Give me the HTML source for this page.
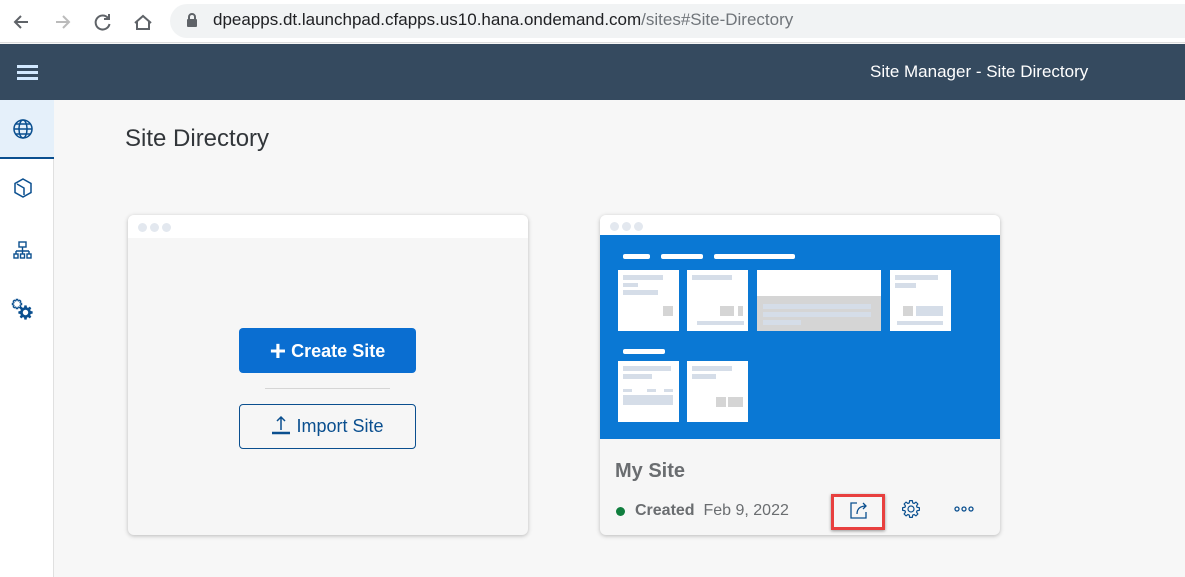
<!DOCTYPE html>
<html><head><style>
*{margin:0;padding:0;box-sizing:border-box}
body{width:1185px;height:577px;overflow:hidden;background:#f7f7f7;font-family:"Liberation Sans",sans-serif;position:relative}
.abs{position:absolute}
.bar{position:absolute;background:#fff;border-radius:2px}
.tile{position:absolute;background:#fff}
.ph{position:absolute;background:#d5dde8}
.gr{position:absolute;background:#d5d5d5}
</style></head><body>
<svg width="0" height="0" style="position:absolute"><defs>
<polygon id="gear" points="6.06,-1.74 8.4,-1.33 8.4,1.33 6.06,1.74 5.51,3.05 6.88,5 5,6.88 3.05,5.51 1.74,6.06 1.33,8.4 -1.33,8.4 -1.74,6.06 -3.05,5.51 -5,6.88 -6.88,5 -5.51,3.05 -6.06,1.74 -8.4,1.33 -8.4,-1.33 -6.06,-1.74 -5.51,-3.05 -6.88,-5 -5,-6.88 -3.05,-5.51 -1.74,-6.06 -1.33,-8.4 1.33,-8.4 1.74,-6.06 3.05,-5.51 5,-6.88 6.88,-5 5.51,-3.05"/>
</defs></svg>
<!-- browser bar -->
<div class="abs" style="left:0;top:0;width:1185px;height:43px;background:#fff;border-bottom:1px solid #ddd"></div>
<svg class="abs" style="left:10px;top:10px" width="150" height="24" viewBox="0 0 150 24" fill="none" stroke-width="2">
<path d="M18 12H5M11 6l-6 6 6 6" stroke="#5f6368"/>
<path d="M46 12h13M53 6l6 6-6 6" stroke="#bbb"/>
<path d="M98 8a7 7 0 1 0 1.5 6M99 4v5h-5" stroke="#5f6368"/>
<path d="M125 13l8-7 8 7M127 11v8h12v-8" stroke="#5f6368"/>
</svg>
<div class="abs" style="left:170px;top:4px;width:1015px;height:34px;background:#f1f3f4;border-radius:17px 0 0 17px"></div>
<svg class="abs" style="left:186px;top:13px" width="12" height="16"><rect x="1" y="6" width="10" height="8" rx="1" fill="#5f6368"/><path d="M3 6V4a3 3 0 0 1 6 0v2" stroke="#5f6368" stroke-width="2" fill="none"/></svg>
<div class="abs" style="left:213px;top:10px;font-size:17px;color:#202124">dpeapps.dt.launchpad.cfapps.us10.hana.ondemand.com<span style="color:#70757a">/sites#Site-Directory</span></div>
<!-- shell -->
<div class="abs" style="left:0;top:44px;width:1185px;height:56px;background:#354a5f"></div>
<div class="abs" style="left:17px;top:65px;width:21px;height:3px;background:#d1e8ff;box-shadow:0 6px 0 #d1e8ff,0 12px 0 #d1e8ff"></div>
<div class="abs" style="left:870px;top:62px;color:#fff;font-size:17px">Site Manager - Site Directory</div>
<!-- sidebar -->
<div class="abs" style="left:0;top:100px;width:54px;height:477px;background:#fff;border-right:1px solid #e0e0e0"></div>
<div class="abs" style="left:0;top:100px;width:54px;height:59px;background:#e5f0fa;border-bottom:2px solid #0a4f8f"></div>
<svg class="abs" style="left:11px;top:117px" width="24" height="24" viewBox="0 0 24 24" fill="none" stroke="#0a4f8f" stroke-width="1.5">
<circle cx="12" cy="12" r="9"/><ellipse cx="12" cy="12" rx="4" ry="9"/><path d="M3 12h18M5 7h14M5 17h14"/></svg>
<svg class="abs" style="left:12px;top:177px" width="22" height="22" viewBox="0 0 22 22" fill="none" stroke="#0a4f8f" stroke-width="1.5">
<path d="M11 2l8 4.5v9L11 20l-8-4.5v-9z"/><path d="M5 7l7 4v7"/></svg>
<svg class="abs" style="left:12px;top:240px" width="22" height="22" viewBox="0 0 22 22" fill="none" stroke="#0a4f8f" stroke-width="1.4">
<rect x="7" y="2" width="7" height="5"/><path d="M10.5 7v4M4 11h13M4 11v3M10.5 11v3M17 11v3"/><rect x="2" y="14" width="4" height="4"/><rect x="8.5" y="14" width="4" height="4"/><rect x="15" y="14" width="4" height="4"/></svg>
<svg class="abs" style="left:11px;top:298px" width="24" height="24" viewBox="0 0 24 24">
<g transform="translate(6,6) scale(0.55)"><use href="#gear" fill="none" stroke="#0a4f8f" stroke-width="2.2"/></g>
<g transform="translate(14.5,14.5) scale(0.85)"><use href="#gear" fill="#0a4f8f"/><circle r="3.2" fill="#fff"/></g>
</svg>
<div class="abs" style="left:125px;top:125px;font-size:24px;color:#32363a">Site Directory</div>
<!-- card 1 -->
<div class="abs" style="left:128px;top:215px;width:400px;height:320px;background:#f6f6f6;border-radius:6px;box-shadow:0 1px 4px rgba(0,0,0,.25);overflow:hidden">
 <div style="height:23px;background:#fff"></div>
 <div class="abs" style="left:10px;top:8px;width:9px;height:9px;border-radius:50%;background:#e3e8ef;box-shadow:12px 0 0 #e3e8ef,24px 0 0 #e3e8ef"></div>
 <div class="abs" style="left:111px;top:113px;width:177px;height:45px;background:#0a6ed1;border-radius:4px;color:#fff;font-weight:bold;font-size:18px;text-align:center;line-height:45px"><span style="font-size:28px;vertical-align:-3px">+</span> Create Site</div>
 <div class="abs" style="left:137px;top:173px;width:125px;height:1px;background:#d5d5d5"></div>
 <div class="abs" style="left:111px;top:189px;width:177px;height:45px;border:1px solid #0a4f8f;border-radius:4px;color:#0a4f8f;font-size:18px;text-align:center;line-height:43px"><span style="display:inline-block;width:20px;height:20px;vertical-align:-3px;position:relative"><svg width="20" height="20" viewBox="0 0 20 20" fill="none" stroke="#0a4f8f"><path d="M10 2v13M6 6l4-4 4 4" stroke-width="1.5"/><path d="M1 18h18" stroke-width="2.5"/></svg></span> Import Site</div>
</div>
<!-- card 2 -->
<div class="abs" style="left:600px;top:215px;width:400px;height:320px;background:#f6f6f6;border-radius:6px;box-shadow:0 1px 4px rgba(0,0,0,.25);overflow:hidden">
 <div style="height:20px;background:#fff"></div>
 <div class="abs" style="left:10px;top:7px;width:9px;height:9px;border-radius:50%;background:#e3e8ef;box-shadow:12px 0 0 #e3e8ef,24px 0 0 #e3e8ef"></div>
 <div class="abs" style="left:0;top:20px;width:400px;height:204px;background:#0a78d4"></div>
 <div class="bar" style="left:23px;top:39px;width:27px;height:5px"></div>
 <div class="bar" style="left:61px;top:39px;width:42px;height:5px"></div>
 <div class="bar" style="left:114px;top:39px;width:81px;height:5px"></div>
 <div class="tile" style="left:18px;top:55px;width:61px;height:61px"><div class="ph" style="left:5px;top:5px;width:40px;height:5px"></div><div class="ph" style="left:5px;top:13px;width:15px;height:4px"></div><div class="ph" style="left:5px;top:20px;width:35px;height:5px"></div><div class="gr" style="left:45px;top:36px;width:10px;height:10px"></div></div>
 <div class="tile" style="left:87px;top:55px;width:61px;height:61px"><div class="ph" style="left:5px;top:5px;width:40px;height:5px"></div><div class="gr" style="left:33px;top:36px;width:14px;height:10px"></div><div class="gr" style="left:51px;top:36px;width:5px;height:10px"></div><div class="ph" style="left:10px;top:51px;width:47px;height:4px"></div></div>
 <div class="tile" style="left:157px;top:55px;width:124px;height:61px"><div class="gr" style="left:0;top:26px;width:124px;height:35px"></div><div class="ph" style="left:6px;top:34px;width:108px;height:5px"></div><div class="ph" style="left:6px;top:42px;width:108px;height:5px"></div><div class="ph" style="left:6px;top:50px;width:38px;height:5px"></div></div>
 <div class="tile" style="left:290px;top:55px;width:61px;height:61px"><div class="ph" style="left:5px;top:5px;width:43px;height:5px"></div><div class="ph" style="left:5px;top:13px;width:21px;height:5px"></div><div class="gr" style="left:13px;top:36px;width:10px;height:10px"></div><div class="ph" style="left:26px;top:36px;width:27px;height:10px"></div><div class="ph" style="left:7px;top:51px;width:46px;height:4px"></div></div>
 <div class="bar" style="left:23px;top:134px;width:42px;height:5px"></div>
 <div class="tile" style="left:18px;top:146px;width:61px;height:61px"><div class="ph" style="left:5px;top:5px;width:48px;height:5px"></div><div class="ph" style="left:5px;top:13px;width:29px;height:5px"></div><div class="ph" style="left:5px;top:28px;width:9px;height:3px"></div><div class="ph" style="left:29px;top:28px;width:9px;height:3px"></div><div class="ph" style="left:46px;top:28px;width:9px;height:3px"></div><div class="ph" style="left:5px;top:34px;width:50px;height:10px"></div></div>
 <div class="tile" style="left:87px;top:146px;width:61px;height:61px"><div class="ph" style="left:5px;top:5px;width:40px;height:5px"></div><div class="ph" style="left:5px;top:13px;width:24px;height:5px"></div><div class="gr" style="left:29px;top:36px;width:10px;height:10px"></div><div class="gr" style="left:41px;top:36px;width:15px;height:10px"></div></div>
 <div class="abs" style="left:15px;top:245px;font-size:20px;font-weight:bold;color:#6a6d70">My Site</div>
 <div class="abs" style="left:16px;top:292px;width:9px;height:9px;border-radius:50%;background:#107e3e"></div>
 <div class="abs" style="left:35px;top:287px;font-size:16px;color:#6a6d70"><b>Created</b>&nbsp;&nbsp;Feb 9, 2022</div>
 <div class="abs" style="left:231px;top:279px;width:54px;height:36px;border:3px solid #e8403f;box-shadow:0 1px 3px rgba(0,0,0,.4)"></div>
 <svg class="abs" style="left:249px;top:285px" width="20" height="20" viewBox="0 0 20 20" fill="none" stroke="#0a4f8f" stroke-width="1.3"><path d="M8 3H2v15h15v-6"/><path d="M8 14c0-5 3-8 9-8M14 3l3 3-3 3"/></svg>
 <svg class="abs" style="left:301px;top:284px" width="20" height="20" viewBox="0 0 20 20"><g transform="translate(10,10)"><use href="#gear" fill="none" stroke="#0a4f8f" stroke-width="1.2" stroke-linejoin="round"/><circle r="3" fill="none" stroke="#0a4f8f" stroke-width="1.2"/></g></svg>
 <svg class="abs" style="left:353px;top:290px" width="22" height="8"><g fill="none" stroke="#0a4f8f" stroke-width="1.3"><circle cx="4" cy="4" r="2"/><circle cx="11" cy="4" r="2"/><circle cx="18" cy="4" r="2"/></g></svg>
</div>
</body></html>
